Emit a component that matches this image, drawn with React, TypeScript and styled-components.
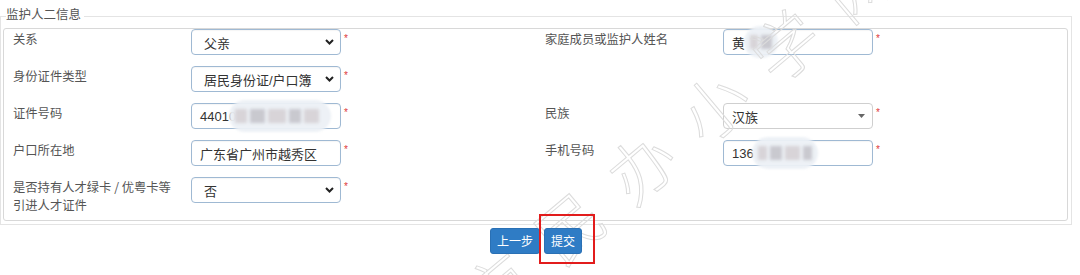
import React from "react";
import styled, { createGlobalStyle } from "styled-components";

const Global = createGlobalStyle`
  html, body { margin: 0; padding: 0; background: #fff; }
  body { font-family: "Liberation Sans", "Noto Sans CJK SC", sans-serif; }
`;

const Page = styled.div`
  position: relative;
  width: 1080px;
  height: 275px;
  overflow: hidden;
  padding-top: 5px;
  box-sizing: border-box;
`;

const Fieldset = styled.fieldset`
  width: 1072px;
  box-sizing: border-box;
  margin: 0;
  padding: 1px 3px 3px 2px;
  border: 1px solid #e4e4e4;
  min-inline-size: 0;
`;

const Legend = styled.legend`
  margin-left: 3px;
  padding: 0 3px 4px 0;
  font-size: 12.5px;
  line-height: 18px;
  color: #555;
  font-family: "Noto Sans CJK SC", sans-serif;
`;

const Box = styled.div`
  border: 1px solid #d8d8d8;
  border-radius: 3px;
  padding: 0 0 6px 0;
  display: flex;
  flex-direction: column;
  gap: 11px;
`;

const Row = styled.div`
  display: grid;
  grid-template-columns: 187px 150px 204px 178px 150px 1fr;
  align-items: start;
`;

const Label = styled.div`
  padding-left: 9px;
  padding-top: 1px;
  font-family: "Noto Sans CJK SC", sans-serif;
  font-size: 12.3px;
  line-height: 18px;
  color: #555;
`;

const RightLabel = styled(Label)`
  padding-left: 0;
`;

const Field = styled.div<{ $plain?: boolean }>`
  position: relative;
  box-sizing: border-box;
  height: 26px;
  border: 1px solid ${(p) => (p.$plain ? "#cfcfcf" : "#9fb9d3")};
  border-radius: 4px;
  background: #fff;
  display: flex;
  align-items: center;
  justify-content: space-between;
  padding: 0 7px 0 8px;
  font-size: 13px;
  color: #333;
  font-family: "Liberation Sans", "Noto Sans CJK SC", sans-serif;
  box-shadow: ${(p) => (p.$plain ? "none" : "inset 0 1px 1px rgba(0,0,0,0.04)")};
`;

const SelectField = styled(Field)`
  padding-left: 12px;
  padding-right: 6px;
`;

const Star = styled.span`
  color: #e0393a;
  font-size: 10px;
  line-height: 10px;
  padding-left: 3px;
  padding-top: 5px;
  display: block;
`;

const Smudge = styled.span`
  position: absolute;
  top: -4px;
  height: 32px;
  border-radius: 16px;
  background: rgba(236, 240, 246, 0.95);
  filter: blur(1px);
  display: flex;
  align-items: center;
  gap: 3px;
  padding: 0 6px;
  box-sizing: border-box;
`;

const Block = styled.span<{ $tone: string }>`
  height: 14px;
  background: ${(p) => p.$tone};
  filter: blur(1.2px);
`;

const Actions = styled.div`
  position: relative;
  z-index: 2;
  width: 1072px;
  display: flex;
  justify-content: center;
  gap: 4px;
  padding-top: 3px;
`;

const Button = styled.button`
  height: 26px;
  border: 1px solid #2a70b4;
  border-radius: 3px;
  background: #2f7cc5;
  color: #fff;
  font-family: "Noto Sans CJK SC", sans-serif;
  font-size: 12px;
  padding: 0 6px;
  line-height: 24px;
`;

const Marked = styled.div`
  position: relative;
`;

const RedFrame = styled.div`
  position: absolute;
  left: -5px;
  top: -14px;
  width: 56px;
  height: 50px;
  box-sizing: border-box;
  border: 2px solid #e21c1c;
  pointer-events: none;
`;

const Watermark = styled.div`
  position: absolute;
  z-index: 1;
  left: 470px;
  top: 258px;
  transform: rotate(-40deg);
  transform-origin: left center;
  white-space: nowrap;
  font-family: "Noto Sans CJK SC", sans-serif;
  font-weight: 300;
  font-size: 66px;
  letter-spacing: 28px;
  color: transparent;
  -webkit-text-stroke: 1px #dcdcdc;
  pointer-events: none;
`;

const Chevron = () => (
  <svg width="9" height="6" viewBox="0 0 9 6">
    <path d="M1 1 L4.5 4.5 L8 1" fill="none" stroke="#222" strokeWidth="2" />
  </svg>
);

const Caret = () => (
  <svg width="7" height="4" viewBox="0 0 7 4">
    <path d="M0 0 L7 0 L3.5 4 Z" fill="#666" />
  </svg>
);

const blurBlocks = (n: number) =>
  Array.from({ length: n }).map((_, i) => (
    <Block key={i} $tone={i % 2 ? "#c9c9cf" : "#d8d4d8"} style={{ width: 12 + (i % 3) * 3 }} />
  ));

export default function App() {
  return (
    <Page>
      <Global />
      <Fieldset>
        <Legend>监护人二信息</Legend>
        <Box>
          <Row>
            <Label>关系</Label>
            <SelectField>
              <span>父亲</span>
              <Chevron />
            </SelectField>
            <Star>*</Star>
            <RightLabel>家庭成员或监护人姓名</RightLabel>
            <Field>
              <span>黄</span>
              <Smudge style={{ left: 20, width: 34 }}>{blurBlocks(2)}</Smudge>
            </Field>
            <Star>*</Star>
          </Row>
          <Row>
            <Label>身份证件类型</Label>
            <SelectField>
              <span>居民身份证/户口簿</span>
              <Chevron />
            </SelectField>
            <Star>*</Star>
          </Row>
          <Row>
            <Label>证件号码</Label>
            <Field>
              <span>44010</span>
              <Smudge style={{ left: 37, width: 102 }}>{blurBlocks(5)}</Smudge>
            </Field>
            <Star>*</Star>
            <RightLabel>民族</RightLabel>
            <Field $plain>
              <span>汉族</span>
              <Caret />
            </Field>
            <Star>*</Star>
          </Row>
          <Row>
            <Label>户口所在地</Label>
            <Field>
              <span>广东省广州市越秀区</span>
            </Field>
            <Star>*</Star>
            <RightLabel>手机号码</RightLabel>
            <Field>
              <span>136</span>
              <Smudge style={{ left: 28, width: 66 }}>{blurBlocks(4)}</Smudge>
            </Field>
            <Star>*</Star>
          </Row>
          <Row>
            <Label>
              是否持有人才绿卡 / 优粤卡等
              <br />
              引进人才证件
            </Label>
            <SelectField>
              <span>否</span>
              <Chevron />
            </SelectField>
            <Star>*</Star>
          </Row>
        </Box>
      </Fieldset>
      <Actions>
        <Button>上一步</Button>
        <Marked>
          <Button>提交</Button>
          <RedFrame />
        </Marked>
      </Actions>
      <Watermark>市民办小学网上报名</Watermark>
    </Page>
  );
}
